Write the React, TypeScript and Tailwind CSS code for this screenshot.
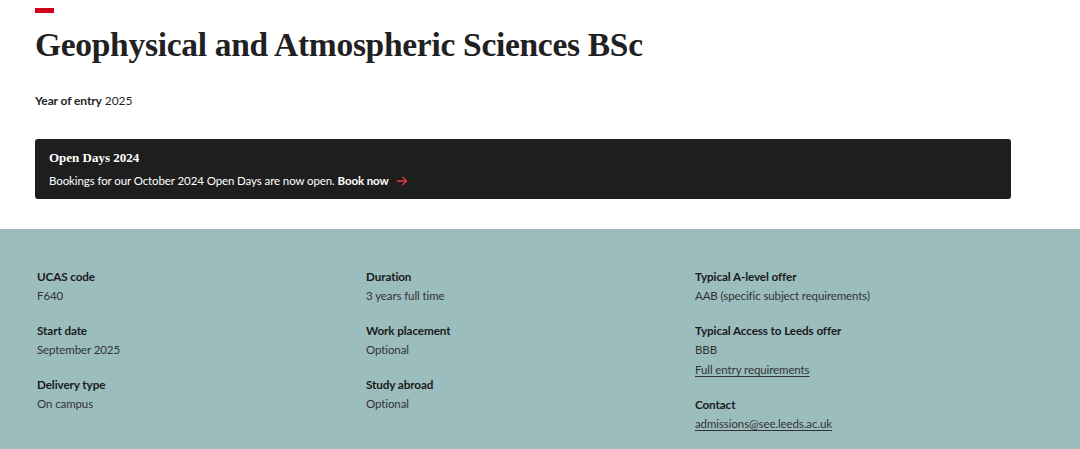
const sans = "font-['Lato','Noto_Sans',sans-serif]";

interface Fact {
  label: string;
  value: string;
  link?: string;
}

const columns: Fact[][] = [
  [
    { label: 'UCAS code', value: 'F640' },
    { label: 'Start date', value: 'September 2025' },
    { label: 'Delivery type', value: 'On campus' },
  ],
  [
    { label: 'Duration', value: '3 years full time' },
    { label: 'Work placement', value: 'Optional' },
    { label: 'Study abroad', value: 'Optional' },
  ],
  [
    { label: 'Typical A-level offer', value: 'AAB (specific subject requirements)' },
    { label: 'Typical Access to Leeds offer', value: 'BBB', link: 'Full entry requirements' },
    { label: 'Contact', value: '', link: 'admissions@see.leeds.ac.uk' },
  ],
];

function ArrowRight() {
  return (
    <svg viewBox="0 0 12 12" className="ml-[7px] h-[12px] w-[12px]" fill="none" stroke="#e8383d" strokeWidth="1.3">
      <path d="M1 6h9.5M6.5 2l4 4-4 4" />
    </svg>
  );
}

export default function App() {
  return (
    <div className={`min-h-screen bg-white ${sans}`}>
      <header className="px-[35px] pt-[8px]">
        <div className="h-[5px] w-[19px] bg-[#d0021b]" />
        <h1 className="mt-[12px] font-['Liberation_Serif','DejaVu_Serif',serif] text-[33.5px] leading-[40px] font-bold tracking-[-0.3px] text-[#1f2123]">
          Geophysical and Atmospheric Sciences BSc
        </h1>
        <p className="mt-[27px] text-[12px] leading-[18px] tracking-[-0.1px] text-[#1f1f1f]">
          <span className="font-bold">Year of entry</span> 2025
        </p>
        <div className="mt-[29px] mr-[34px] rounded-[3px] bg-[#1e1e1e] px-[14px] pt-[11px] pb-[9px] text-white">
          <p className="font-['Liberation_Serif',serif] text-[13px] leading-[16px] font-bold">Open Days 2024</p>
          <p className="mt-[6px] flex items-center text-[11.5px] leading-[18px] tracking-[-0.1px]">
            Bookings for our October 2024 Open Days are now open.&nbsp;
            <span className="font-bold">Book now</span>
            <ArrowRight />
          </p>
        </div>
      </header>

      <section className="mt-[30px] bg-[#9bbdbe] px-[37px] pt-[37px] pb-[20px]">
        <div className="grid grid-cols-[329px_329px_329px]">
          {columns.map((col, i) => (
            <div key={i} className="flex flex-col gap-[14px]">
              {col.map((f) => (
                <div key={f.label} className="text-[11.7px] leading-[20px] tracking-[-0.1px]">
                  <p className="font-bold text-[#1a1a1a]">{f.label}</p>
                  {f.value && <p className="text-[11.5px] text-[#333333]">{f.value}</p>}
                  {f.link && (
                    <a href="#" className="block text-[11.5px] text-[#333333] underline underline-offset-2">
                      {f.link}
                    </a>
                  )}
                </div>
              ))}
            </div>
          ))}
        </div>
      </section>
    </div>
  );
}
